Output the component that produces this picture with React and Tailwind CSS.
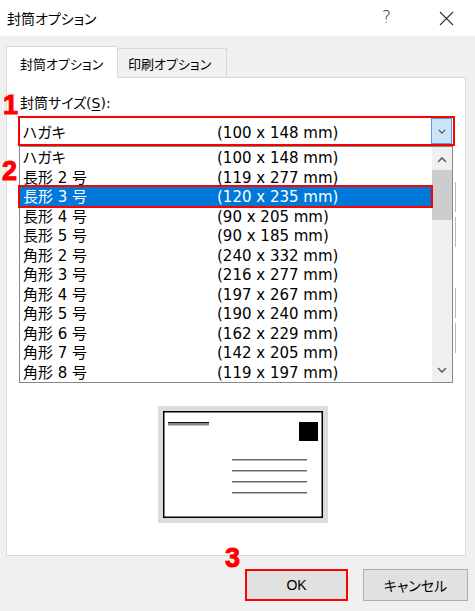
import React from 'react';

const jp = "font-['Noto_Sans_CJK_JP',sans-serif] [font-feature-settings:'palt']";
const mix = "font-['DejaVu_Sans','Noto_Sans_CJK_JP',sans-serif] [font-feature-settings:'palt']";

const rows = [
  ['ハガキ', '(100 x 148 mm)'],
  ['長形 2 号', '(119 x 277 mm)'],
  ['長形 3 号', '(120 x 235 mm)'],
  ['長形 4 号', '(90 x 205 mm)'],
  ['長形 5 号', '(90 x 185 mm)'],
  ['角形 2 号', '(240 x 332 mm)'],
  ['角形 3 号', '(216 x 277 mm)'],
  ['角形 4 号', '(197 x 267 mm)'],
  ['角形 5 号', '(190 x 240 mm)'],
  ['角形 6 号', '(162 x 229 mm)'],
  ['角形 7 号', '(142 x 205 mm)'],
  ['角形 8 号', '(119 x 197 mm)'],
];

const Chevron = ({ up, className }) => (
  <svg width="10" height="6" viewBox="0 0 10 6" className={className}>
    <polyline
      points={up ? '1,5 5,1 9,5' : '1,1 5,5 9,1'}
      fill="none"
      stroke="currentColor"
      strokeWidth="1.6"
    />
  </svg>
);

const Marker = ({ children, className }) => (
  <span
    className={`absolute font-['Liberation_Sans',sans-serif] font-bold text-[27px] leading-none text-[#ff0000] [-webkit-text-stroke:1px_#ff0000] [text-shadow:0_0_2px_#fff] ${className}`}
  >
    {children}
  </span>
);

const Envelope = () => (
  <div className="ml-[140px] mt-[23px] w-[170px] h-[117px] bg-[#dcdcdc] p-[5px]">
    <svg width="160" height="107" viewBox="0 0 160 107" className="block">
      <rect x="0.75" y="0.75" width="158.5" height="105.5" fill="#fff" stroke="#000" strokeWidth="1.5" />
      <rect x="5" y="11" width="41" height="1.5" fill="#111" />
      <rect x="5" y="13" width="41" height="1.5" fill="#8a8a8a" />
      <rect x="136" y="11" width="19" height="19" fill="#000" />
      {[48, 59, 70, 81].map((y) => (
        <g key={y}>
          <rect x="69" y={y} width="75" height="1" fill="#666" />
          <rect x="69" y={y + 1} width="75" height="1" fill="#b8b8b8" />
        </g>
      ))}
    </svg>
  </div>
);

export default function App() {
  return (
    <div className={`relative w-[475px] h-[611px] flex flex-col bg-[#f0f0f0] text-black ${jp}`}>
      {/* title bar */}
      <div className="h-[36px] bg-white flex items-center pl-[7px]">
        <span className="text-[14px]">封筒オプション</span>
        <span className="ml-auto mr-[48px] font-['DejaVu_Sans',sans-serif] text-[17px] text-[#333] font-light">?</span>
        <svg width="15" height="15" viewBox="0 0 15 15" className="mr-[21px]">
          <path d="M1 1 L14 14 M14 1 L1 14" stroke="#333" strokeWidth="1.1" />
        </svg>
      </div>

      {/* tabs */}
      <div className="flex items-end pl-[6px] pt-[10px] -mb-px relative z-10">
        <div className="h-[32px] w-[112px] bg-white border border-b-0 border-[#d9d9d9] pl-[13px] pt-[7px] text-[13px]">
          封筒オプション
        </div>
        <div className="h-[30px] w-[109px] border border-l-0 border-[#d9d9d9] pl-[10px] pt-[5px] text-[13px]">
          印刷オプション
        </div>
      </div>

      {/* panel */}
      <div className="relative mx-[6px] w-[460px] h-[479px] bg-white border border-[#d9d9d9] px-[11px] pt-[14px]">
        <div className="pl-[2px] h-[20px] leading-[20px] text-[14px]">
          <span className={mix}>
            封筒サイズ(<span className="underline underline-offset-2">S</span>):
          </span>
        </div>

        {/* combo */}
        <div className={`mt-[4px] w-[437px] h-[30px] border-2 border-[#ff0000] flex items-center ${mix} text-[15px]`}>
          <div className="flex-1 flex pl-[3px] relative top-[2px]">
            <span className="w-[194px]">ハガキ</span>
            <span>(100 x 148 mm)</span>
          </div>
          <div className="w-[21px] h-[26px] mr-[1px] bg-[#cce4f7] border border-[#569de5] flex items-center justify-center text-[#555]">
            <Chevron className="w-[8px] h-[5px]" />
          </div>
        </div>

        {/* list */}
        <div className="ml-[1px] w-[434px] h-[237px] border border-[#828790] flex">
          <div className={`w-[412px] ${mix} text-[15px]`}>
            {rows.map(([a, b], i) => (
              <div
                key={i}
                className={`relative flex h-[19.55px] leading-[19.55px] pl-[3px] ${
                  i === 2 ? 'bg-[#0078d7] text-white' : ''
                }`}
              >
                <span className="w-[194px] relative top-[2px]">{a}</span>
                <span className="relative top-[2px]">{b}</span>
                {i === 2 && (
                  <span className="absolute -top-[1px] -bottom-[2px] -left-[2px] -right-[1px] border-2 border-[#ff0000]" />
                )}
              </div>
            ))}
          </div>
          <div className="w-[20px] bg-[#f0f0f0] flex flex-col text-[#606060]">
            <div className="h-[23px] flex items-center justify-center pt-[3px]">
              <Chevron up />
            </div>
            <div className="h-[50px] bg-[#cdcdcd]" />
            <div className="flex-1" />
            <div className="h-[23px] flex items-center justify-center pb-[1px]">
              <Chevron />
            </div>
          </div>
        </div>

        {/* edges of controls hidden behind the open list */}
        {[[104, 30], [139, 30], [210, 30], [245, 30]].map(([t, h]) => (
          <span
            key={t}
            className="absolute left-[446px] w-[3px] border-r border-[#b8b8b8]"
            style={{ top: t, height: h }}
          />
        ))}

        <Envelope />
      </div>

      {/* buttons */}
      <div className="flex justify-end gap-[15px] mt-[13px] pr-[7px] text-[14px]">
        <div className="w-[103px] h-[32px] bg-[#e1e1e1] border-2 border-[#ff0000] flex items-center justify-center font-['Liberation_Sans',sans-serif]">
          OK
        </div>
        <div className="w-[105px] h-[32px] bg-[#e1e1e1] border border-[#adadad] flex items-center justify-center">
          キャンセル
        </div>
      </div>

      <Marker className="left-[3px] top-[92px]">1</Marker>
      <Marker className="left-[2px] top-[158px]">2</Marker>
      <Marker className="left-[225px] top-[545px]">3</Marker>
    </div>
  );
}
